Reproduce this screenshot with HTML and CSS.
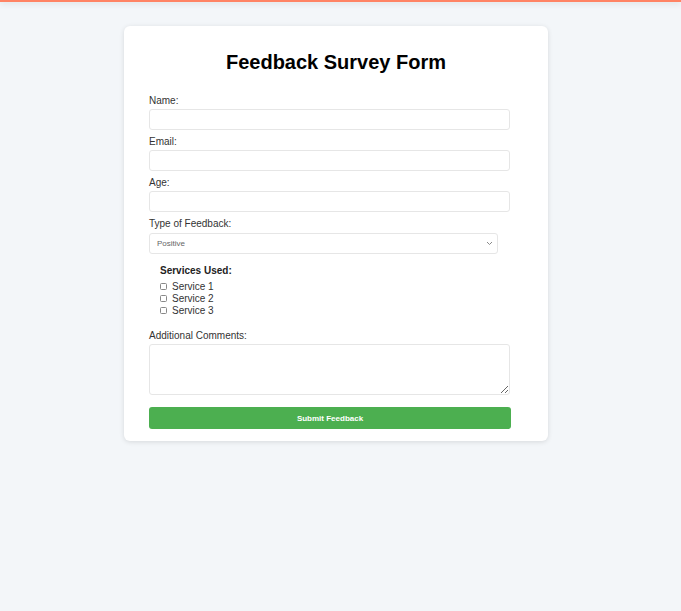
FILE: index.html
```html
<!DOCTYPE html>
<html lang="en">
<head>
<meta charset="utf-8">
<title>Feedback Survey Form</title>
<link rel="stylesheet" href="styles.css">
</head>
<body>
<div class="topbar"></div>
<div class="page">
  <div class="card">
    <h1 class="title">Feedback Survey Form</h1>
    <form class="form">
      <label class="label" for="name">Name:</label>
      <input class="field" type="text" id="name">
      <label class="label" for="email">Email:</label>
      <input class="field" type="email" id="email">
      <label class="label" for="age">Age:</label>
      <input class="field" type="number" id="age">
      <label class="label" for="type">Type of Feedback:</label>
      <div class="select-wrap">
        <select class="select" id="type">
          <option>Positive</option>
          <option>Negative</option>
          <option>Neutral</option>
        </select>
        <svg class="chev" width="7" height="5" viewBox="0 0 7 5"><path d="M1 1 L3.5 3.5 L6 1" fill="none" stroke="#8a8a8a" stroke-width="1"/></svg>
      </div>
      <fieldset class="services">
        <legend class="legend">Services Used:</legend>
        <label class="check"><input class="box" type="checkbox"> Service 1</label>
        <label class="check"><input class="box" type="checkbox"> Service 2</label>
        <label class="check"><input class="box" type="checkbox"> Service 3</label>
      </fieldset>
      <label class="label" for="comments">Additional Comments:</label>
      <textarea class="area" id="comments"></textarea>
      <button class="submit" type="submit">Submit Feedback</button>
    </form>
  </div>
</div>
</body>
</html>
```
FILE: styles.css
```css
html, body {
  margin: 0;
  padding: 0;
}
body {
  background: #f3f6f9;
  font-family: "Liberation Sans", Arial, sans-serif;
  color: #333;
  min-height: 611px;
}
.topbar {
  height: 2px;
  background: #ff8364;
  box-shadow: 0 1px 6px rgba(0, 0, 0, 0.18);
}
.page {
  padding: 24px 9px 0 0;
}
.card {
  width: 424px;
  box-sizing: border-box;
  margin: 0 auto;
  background: #fff;
  border-radius: 6px;
  padding: 12px 37px 12px 25px;
  box-shadow: 0 1px 5px rgba(0, 0, 0, 0.12);
}
.title {
  font-size: 20px;
  line-height: 23px;
  font-weight: bold;
  text-align: center;
  color: #000;
  margin: 13px -37px 21px -25px;
}
.form {
  display: flex;
  flex-direction: column;
  align-items: flex-start;
}
.label {
  display: block;
  font-size: 10px;
  line-height: 12px;
  color: #333;
  margin-bottom: 2px;
}
.field {
  display: block;
  width: 361px;
  height: 21px;
  box-sizing: border-box;
  border: 1px solid #e6e6e6;
  border-radius: 3px;
  margin: 0 0 6px 0;
  padding: 0 6px;
  font-size: 10px;
  background: #fff;
}
.select-wrap {
  position: relative;
  width: 349px;
  height: 21px;
}
.select {
  appearance: none;
  -webkit-appearance: none;
  width: 349px;
  height: 21px;
  box-sizing: border-box;
  border: 1px solid #e6e6e6;
  border-radius: 3px;
  background: #fff;
  padding: 0 7px;
  font-family: "Liberation Sans", Arial, sans-serif;
  font-size: 8px;
  color: #666;
  margin: 0;
}
.chev {
  position: absolute;
  right: 5px;
  top: 9px;
  pointer-events: none;
}
.services {
  border: none;
  margin: 12px 0 13px 0;
  padding: 0 0 0 11px;
  display: flex;
  flex-direction: column;
}
.legend {
  padding: 0;
  font-size: 10px;
  line-height: 12px;
  font-weight: bold;
  color: #222;
  margin-bottom: 4px;
}
.check {
  display: flex;
  align-items: center;
  gap: 5px;
  font-size: 10px;
  line-height: 12px;
  color: #333;
}
.box {
  appearance: none;
  -webkit-appearance: none;
  width: 7px;
  height: 7px;
  box-sizing: border-box;
  border: 1px solid #888;
  border-radius: 1.5px;
  margin: 0 0 1px 0;
  background: #fff;
}
.area {
  display: block;
  width: 361px;
  height: 51px;
  box-sizing: border-box;
  border: 1px solid #e6e6e6;
  border-radius: 3px;
  margin: 0 0 12px 0;
  padding: 4px 6px;
  font-size: 10px;
}
.submit {
  width: 362px;
  height: 22px;
  border: none;
  border-radius: 3px;
  background: #4caf50;
  color: #fff;
  font-family: "Liberation Sans", Arial, sans-serif;
  font-weight: bold;
  font-size: 8px;
  padding: 0;
  cursor: pointer;
}
```
